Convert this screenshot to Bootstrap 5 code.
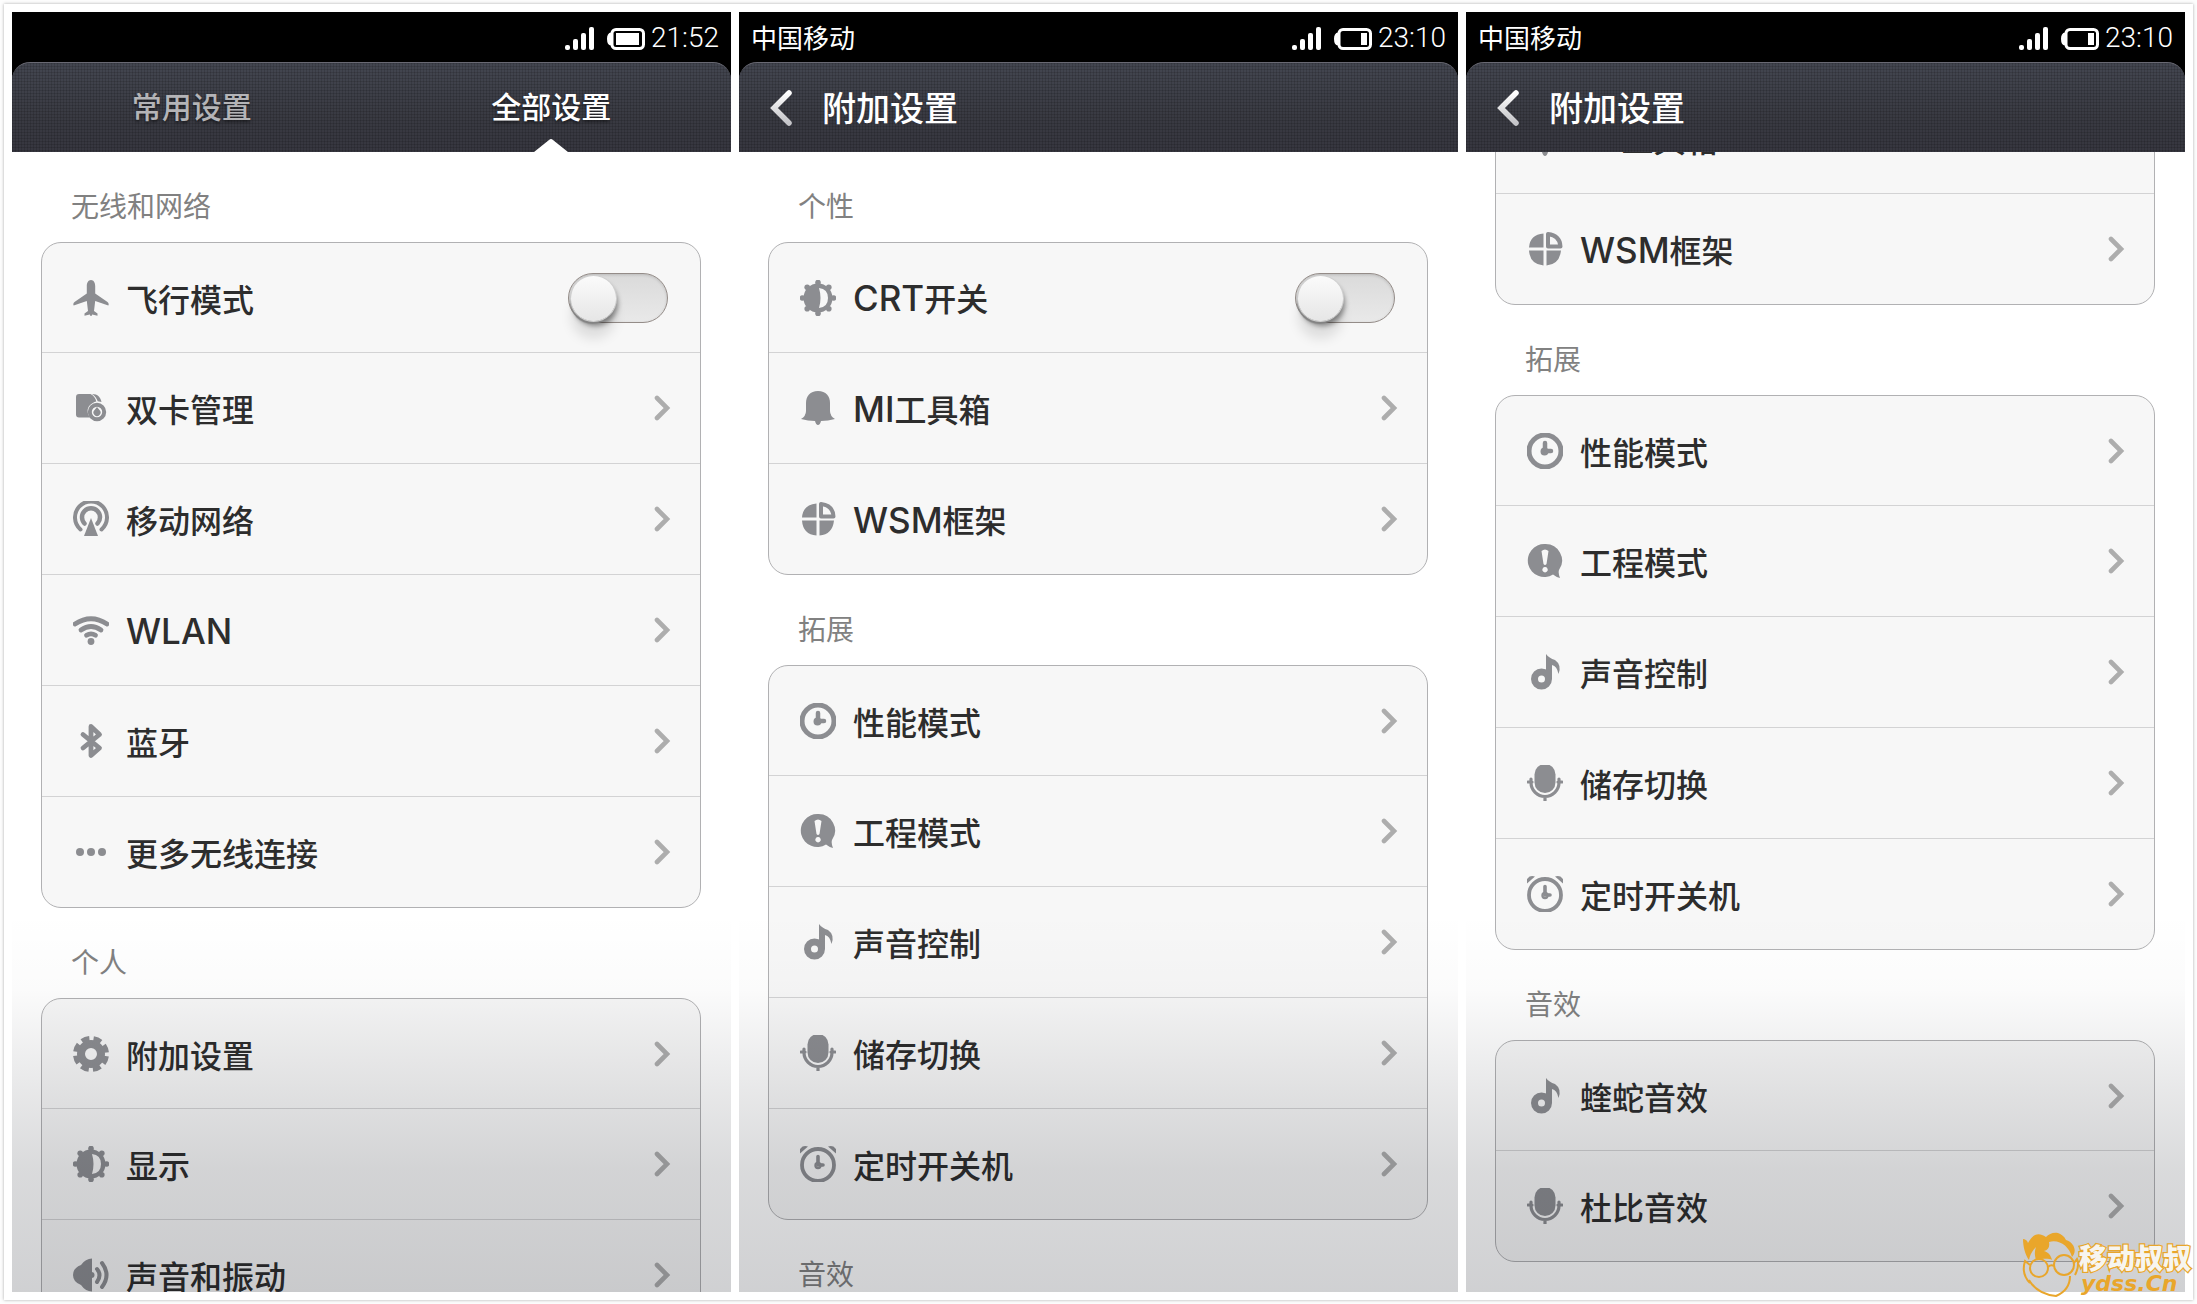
<!DOCTYPE html>
<html lang="zh-CN">
<head>
<meta charset="utf-8">
<meta name="viewport" content="width=device-width, initial-scale=1">
<title>设置</title>
<link href="https://cdn.jsdelivr.net/npm/bootstrap@5.3.0/dist/css/bootstrap.min.css" rel="stylesheet">
<style>
body{background:#fdfdfd;font-family:"Noto Sans CJK SC","Liberation Sans",sans-serif;color:#2d2d2d}
.sheet{background:#fff;box-shadow:0 0 3px #aaa}
.phone{flex:1 1 0;min-width:0;background:#fff}
.phone-scroll{min-height:0;flex:1 1 0;overflow:hidden}
.phone-scroll::after{content:"";position:absolute;inset:auto 0 0 0;height:380px;pointer-events:none;
 background:linear-gradient(rgba(4,8,18,0),rgba(4,8,18,.015) 20%,rgba(4,8,18,.09) 46%,rgba(4,8,18,.15) 68%,rgba(4,8,18,.19))}
.statusbar{height:50px;background:#000;color:#fff;padding:0 12px 0 12px}
.statusbar svg{margin-top:4px}
.carrier{font-size:26px;line-height:48px}
.clock{font:300 28px/56px Roboto,"Liberation Sans",sans-serif;margin-left:6px;padding-top:2px}
.topbar{height:90px;border-radius:18px 18px 0 0;border-top:1px solid #696973;color:#fff;
 background:repeating-linear-gradient(90deg,rgba(0,0,0,.13) 0 1px,transparent 1px 3px),repeating-linear-gradient(rgba(0,0,0,.13) 0 1px,transparent 1px 3px),linear-gradient(#434650,#393a42 60%,#36363f)}
.topbar a{color:#fff;text-decoration:none;text-shadow:0 2px 3px rgba(0,0,0,.5)}
.tab{font-size:30px;font-weight:500;line-height:84px}
.topbar a.tab-off{color:#b4b4b7}
.tab-mark{bottom:0;left:50%;margin-left:-17px}
.page-name{font-size:34px;font-weight:500;line-height:86px;margin:0 0 2px}
.back{margin-left:30px;margin-right:29px}
.group-name{font-size:28px;line-height:40px;color:#818181;margin:0;padding:33px 0 17px 59px}
.rows{margin:0 30px 0 29px;border:1px solid #b1b1b3;border-radius:20px;background:#f7f7f7;flex-shrink:0}
.rows .list-group-item{min-height:111px;background:transparent;border:0;border-bottom:1px solid #d3d3d4;padding:0 29px 0 31px;color:#2d2d2d;font-size:32px;font-weight:500;line-height:48px}
.rows .list-group-item:first-child,.rows .list-group-item:last-child{min-height:110px}
.rows .list-group-item:last-child{border-bottom:0}
.row-icon{width:36px;height:36px;margin-right:17px;flex:none;color:#8c8d91;overflow:visible}
.row-text{flex:1 1 auto}
.latin{font-family:Inter,"Liberation Sans",sans-serif;font-size:35px}
.chev{width:17px;height:26px;flex:none;color:#adadad}
.rows .toggle{width:100px;height:50px;margin:0 3px 0 0;flex:none;border:1px solid #948c88;border-radius:25px;background:linear-gradient(#dadada,#e9e9e9);box-shadow:inset 0 1px 3px rgba(0,0,0,.15);appearance:none;position:relative;cursor:pointer}
.toggle::before{content:"";position:absolute;left:2px;top:2px;width:45px;height:45px;border-radius:50%;background:linear-gradient(#e6e6e6,#fbfbfb);background:linear-gradient(#fbfbfb,#e6e6e6);box-shadow:0 0 0 1px #d0d0d0,-1px 3px 1px #858585,2px 5px 5px rgba(0,0,0,.4),0 18px 12px rgba(0,0,0,.1)}
.toggle:checked::before{left:51px}
.foot-pad{height:30px;flex:none}
.stamp{right:4px;bottom:4px;width:174px;height:68px}
.stamp-cn{font-family:"Noto Sans CJK SC",sans-serif;font-weight:900}
.stamp-url{font-family:"DejaVu Sans",sans-serif;font-weight:700;font-style:italic}
</style>
</head>
<body class="vh-100 overflow-hidden d-flex p-1">
<svg width="0" height="0" class="position-absolute" aria-hidden="true">
<defs>
<linearGradient id="silver" x1="0" y1="0" x2="0" y2="1"><stop offset="0" stop-color="#fff"/><stop offset="1" stop-color="#c4c4c8"/></linearGradient>
<symbol id="chev" viewBox="0 0 17 26"><path d="M3 3l10 10L3 23" fill="none" stroke="currentColor" stroke-width="4.6" stroke-linecap="round" stroke-linejoin="miter"/></symbol>
<symbol id="signal" viewBox="0 0 30 24"><g fill="#fff"><rect x="0" y="18" width="5" height="5" rx="2"/><rect x="8" y="12" width="5" height="11" rx="2"/><rect x="16" y="6" width="5" height="17" rx="2"/><rect x="24" y="0" width="5" height="23" rx="2"/></g></symbol>
<symbol id="cell" viewBox="0 0 38 24"><rect x="5" y="2.5" width="31.500" height="19" rx="4" fill="none" stroke="#fff" stroke-width="3"/><path d="M4 5.500Q0 6 0 12t4 6.500z" fill="#fff"/></symbol>
<symbol id="plane" viewBox="0 0 36 36"><path fill="currentColor" d="M18 0c2.800 0 4.200 3 4.200 6v7.500L34.500 22c1.200 1 1.500 2.500 .8 3.500L22.200 21l-1.200 10 3.500 2.500v2.300l-5.300-1.300L18 37l-1.200-2.500-5.300 1.300v-2.300l3.500-2.500-1.200-10L.7 25.500c-.7-1-.4-2.500 .8-3.500l12.300-8.500V6c0-3 1.400-6 4.200-6z"/></symbol>
<symbol id="sim" viewBox="0 0 36 36"><path fill="currentColor" d="M6 4h11.500c3 1.500 5 4 5.800 7.500-5 1.300-8.700 5-8.700 9.500 0 2.500.9 4.700 2.400 6.500H6q-3 0-3-3V7q0-3 3-3z"/><path fill="currentColor" d="M19 4c6 0 8.500 3.500 9.500 8l-3.800-.8C23.700 8.500 22 6 19 4z"/><circle cx="24" cy="22" r="7.200" fill="none" stroke="currentColor" stroke-width="4"/><path fill="currentColor" d="M24 17l2.500 3A3.500 3.500 0 1 1 21.500 20z"/></symbol>
<symbol id="antenna" viewBox="0 0 36 36"><g fill="none" stroke="currentColor" stroke-width="4" stroke-linecap="round"><path d="M7.500 28.500A16 16 0 1 1 28.500 28.500"/><path d="M11.500 22.500A9 9 0 1 1 24.500 22.500" stroke-width="4.500"/></g><path fill="currentColor" d="M18 17l7 18H11z"/></symbol>
<symbol id="wifi" viewBox="0 0 36 36"><g fill="none" stroke="currentColor" stroke-width="4.800" stroke-linecap="round"><path d="M2 12Q18 1.500 34 12"/><path d="M8 18Q18 11 28 18"/><path d="M13.500 23.300Q18 20.500 22.500 23.300"/></g><circle cx="18" cy="29.500" r="3.400" fill="currentColor"/></symbol>
<symbol id="bt" viewBox="0 0 36 36"><path d="M10 11.500L26.500 25 18 32.500V3.500L26.500 11.500 10 25" fill="none" stroke="currentColor" stroke-width="4.800" stroke-linecap="round" stroke-linejoin="round"/></symbol>
<symbol id="dots" viewBox="0 0 36 36"><g fill="currentColor"><circle cx="7" cy="18" r="4"/><circle cx="18" cy="18" r="4"/><circle cx="29" cy="18" r="4"/></g></symbol>
<symbol id="gear" viewBox="0 0 36 36"><circle cx="18" cy="18" r="10" fill="none" stroke="currentColor" stroke-width="8"/><circle cx="18" cy="18" r="14.500" fill="none" stroke="currentColor" stroke-width="7" stroke-dasharray="7.400 3.988" stroke-dashoffset="-1.994"/></symbol>
<symbol id="bright" viewBox="0 0 36 36"><path fill="currentColor" fill-rule="evenodd" d="M18 3.500a14.500 14.500 0 1 1 0 29 14.500 14.500 0 1 1 0-29zM19 8q3 10 0 20 9-1 9-10T19 8z"/><g fill="currentColor"><circle cx="18" cy="2.500" r="2.800"/><circle cx="18" cy="33.500" r="2.800"/><circle cx="2.500" cy="18" r="2.800"/><circle cx="33.500" cy="18" r="2.800"/><circle cx="7.200" cy="7.200" r="2.800"/><circle cx="28.800" cy="7.200" r="2.800"/><circle cx="7.200" cy="28.800" r="2.800"/><circle cx="28.800" cy="28.800" r="2.800"/></g></symbol>
<symbol id="speaker" viewBox="0 0 36 36"><path fill="currentColor" d="M19 1.500v33q-6.500 0-11-6.500-8-3-8-10t8-10Q12.500 1.500 19 1.500z"/><g fill="none" stroke="currentColor" stroke-width="4" stroke-linecap="round"><path d="M24 12q5 6 0 13"/><path d="M29 6q9 12 0 24"/></g><circle cx="18.500" cy="18" r="3" fill="currentColor"/></symbol>
<symbol id="bell" viewBox="0 0 36 36"><path fill="currentColor" d="M18 1c8 0 12 5 12 12v8q0 5 5 8-7 2-14 2-1 4-3 4t-3-4q-7 0-14-2 5-3 5-8v-8C6 6 10 1 18 1z"/></symbol>
<symbol id="pie" viewBox="0 0 36 36"><path fill="currentColor" d="M16.500 2.500v14H2q1-13 14.500-14zM2 19.500h14.500v15Q3 33.500 2 19.500zM19.500 19.500H34q-1.500 14-14.500 15z"/><path fill="none" stroke="currentColor" stroke-width="4" stroke-linejoin="round" d="M21 3v12.500h12.500Q33 4.500 21 3z"/></symbol>
<symbol id="clock" viewBox="0 0 36 36"><circle cx="18" cy="18" r="16" fill="none" stroke="currentColor" stroke-width="5"/><path d="M18 10v8h6" fill="none" stroke="currentColor" stroke-width="4.500" stroke-linecap="round"/><circle cx="17.500" cy="18.500" r="2.800" fill="none" stroke="currentColor" stroke-width="2.400"/></symbol>
<symbol id="bang" viewBox="0 0 36 36"><path fill="currentColor" fill-rule="evenodd" d="M18 1a16.500 16.500 0 0 1 14 26q-1 3 1 8-4-1-7-3.500A16.500 16.500 0 1 1 18 1zM14.500 8l2 13q1.500 2 3 0l2-13q-3.500-3-7 0zM18 24a2.700 2.700 0 1 0 .1 0z"/></symbol>
<symbol id="note" viewBox="0 0 36 36"><circle cx="14.500" cy="25" r="7" fill="none" stroke="currentColor" stroke-width="7"/><path fill="currentColor" d="M19 0q3 4 9 6 7 5 3.500 14Q30 12 25 11v14h-6z"/></symbol>
<symbol id="mic" viewBox="0 0 36 36"><rect x="7.500" y="-1" width="21" height="29" rx="10.500" fill="currentColor"/><path d="M4 14v3.500a14 14 0 0 0 28 0V14M1 17h4M31 17h4M18 32v4" fill="none" stroke="currentColor" stroke-width="3.200" stroke-linecap="round"/></symbol>
<symbol id="alarm" viewBox="0 0 36 36"><circle cx="18" cy="19" r="16" fill="none" stroke="currentColor" stroke-width="3.800"/><path d="M18 10.500v8.500h5" fill="none" stroke="currentColor" stroke-width="3.600" stroke-linecap="round"/><circle cx="18" cy="19.500" r="2.600" fill="none" stroke="currentColor" stroke-width="2.200"/><path fill="currentColor" d="M8 .5Q3-1 .5 2.500T-.5 8zM28 .5Q33-1 35.500 2.500T36.500 8z"/></symbol>
<symbol id="back" viewBox="0 0 24 36"><path d="M20 3L5 18l15 15" fill="none" stroke="url(#silver)" stroke-width="5.500" stroke-linecap="round"/></symbol>
</defs>
</svg>

<div class="sheet flex-fill d-flex gap-2 p-2 position-relative">

<section class="phone d-flex flex-column">
  <div class="bg-black">
    <div class="statusbar d-flex align-items-center">
      <svg class="ms-auto me-2" width="30" height="24" role="img" aria-label="信号"><use href="#signal"/></svg>
      <svg class="ms-1" width="38" height="24" role="img" aria-label="电池"><use href="#cell"/><rect x="9" y="6" width="23" height="12" fill="#fff"/></svg>
      <span class="clock">21:52</span>
    </div>
    <nav class="topbar d-flex text-center">
      <a href="#" class="tab tab-off w-50">常用设置</a>
      <a href="#" class="tab w-50 position-relative" aria-current="page">全部设置
        <svg class="tab-mark position-absolute" width="34" height="13" aria-hidden="true"><path d="M0 13L15 1q2-2 4 0l15 12z" fill="#fff"/></svg></a>
    </nav>
  </div>
  <div class="phone-scroll position-relative d-flex flex-column">
    <h2 class="group-name fw-normal">无线和网络</h2>
    <div class="rows list-group">
      <div class="list-group-item d-flex align-items-center"><svg class="row-icon"><use href="#plane"/></svg><label class="row-text" for="flight">飞行模式</label><input class="toggle" type="checkbox" role="switch" id="flight"></div>
      <a href="#" class="list-group-item d-flex align-items-center"><svg class="row-icon"><use href="#sim"/></svg><span class="row-text">双卡管理</span><svg class="chev"><use href="#chev"/></svg></a>
      <a href="#" class="list-group-item d-flex align-items-center"><svg class="row-icon"><use href="#antenna"/></svg><span class="row-text">移动网络</span><svg class="chev"><use href="#chev"/></svg></a>
      <a href="#" class="list-group-item d-flex align-items-center"><svg class="row-icon"><use href="#wifi"/></svg><span class="row-text"><span class="latin">WLAN</span></span><svg class="chev"><use href="#chev"/></svg></a>
      <a href="#" class="list-group-item d-flex align-items-center"><svg class="row-icon"><use href="#bt"/></svg><span class="row-text">蓝牙</span><svg class="chev"><use href="#chev"/></svg></a>
      <a href="#" class="list-group-item d-flex align-items-center"><svg class="row-icon"><use href="#dots"/></svg><span class="row-text">更多无线连接</span><svg class="chev"><use href="#chev"/></svg></a>
    </div>
    <h2 class="group-name fw-normal">个人</h2>
    <div class="rows list-group">
      <a href="#" class="list-group-item d-flex align-items-center"><svg class="row-icon"><use href="#gear"/></svg><span class="row-text">附加设置</span><svg class="chev"><use href="#chev"/></svg></a>
      <a href="#" class="list-group-item d-flex align-items-center"><svg class="row-icon"><use href="#bright"/></svg><span class="row-text">显示</span><svg class="chev"><use href="#chev"/></svg></a>
      <a href="#" class="list-group-item d-flex align-items-center"><svg class="row-icon"><use href="#speaker"/></svg><span class="row-text">声音和振动</span><svg class="chev"><use href="#chev"/></svg></a>
    </div>
  </div>
</section>

<section class="phone d-flex flex-column">
  <div class="bg-black">
    <div class="statusbar d-flex align-items-center">
      <span class="carrier">中国移动</span>
      <svg class="ms-auto me-2" width="30" height="24" role="img" aria-label="信号"><use href="#signal"/></svg>
      <svg class="ms-1" width="38" height="24" role="img" aria-label="电池"><use href="#cell"/><rect x="27" y="6" width="6" height="12" fill="#fff"/></svg>
      <span class="clock">23:10</span>
    </div>
    <div class="topbar d-flex align-items-center">
      <a href="#" class="back d-flex" aria-label="返回"><svg width="24" height="36"><use href="#back"/></svg></a>
      <h1 class="page-name">附加设置</h1>
    </div>
  </div>
  <div class="phone-scroll position-relative d-flex flex-column">
    <h2 class="group-name fw-normal">个性</h2>
    <div class="rows list-group">
      <div class="list-group-item d-flex align-items-center"><svg class="row-icon"><use href="#bright"/></svg><label class="row-text" for="crt"><span class="latin">CRT</span>开关</label><input class="toggle" type="checkbox" role="switch" id="crt"></div>
      <a href="#" class="list-group-item d-flex align-items-center"><svg class="row-icon"><use href="#bell"/></svg><span class="row-text"><span class="latin">MI</span>工具箱</span><svg class="chev"><use href="#chev"/></svg></a>
      <a href="#" class="list-group-item d-flex align-items-center"><svg class="row-icon"><use href="#pie"/></svg><span class="row-text"><span class="latin">WSM</span>框架</span><svg class="chev"><use href="#chev"/></svg></a>
    </div>
    <h2 class="group-name fw-normal">拓展</h2>
    <div class="rows list-group">
      <a href="#" class="list-group-item d-flex align-items-center"><svg class="row-icon"><use href="#clock"/></svg><span class="row-text">性能模式</span><svg class="chev"><use href="#chev"/></svg></a>
      <a href="#" class="list-group-item d-flex align-items-center"><svg class="row-icon"><use href="#bang"/></svg><span class="row-text">工程模式</span><svg class="chev"><use href="#chev"/></svg></a>
      <a href="#" class="list-group-item d-flex align-items-center"><svg class="row-icon"><use href="#note"/></svg><span class="row-text">声音控制</span><svg class="chev"><use href="#chev"/></svg></a>
      <a href="#" class="list-group-item d-flex align-items-center"><svg class="row-icon"><use href="#mic"/></svg><span class="row-text">储存切换</span><svg class="chev"><use href="#chev"/></svg></a>
      <a href="#" class="list-group-item d-flex align-items-center"><svg class="row-icon"><use href="#alarm"/></svg><span class="row-text">定时开关机</span><svg class="chev"><use href="#chev"/></svg></a>
    </div>
    <h2 class="group-name fw-normal">音效</h2>
  </div>
</section>

<section class="phone d-flex flex-column">
  <div class="bg-black">
    <div class="statusbar d-flex align-items-center">
      <span class="carrier">中国移动</span>
      <svg class="ms-auto me-2" width="30" height="24" role="img" aria-label="信号"><use href="#signal"/></svg>
      <svg class="ms-1" width="38" height="24" role="img" aria-label="电池"><use href="#cell"/><rect x="27" y="6" width="6" height="12" fill="#fff"/></svg>
      <span class="clock">23:10</span>
    </div>
    <div class="topbar d-flex align-items-center">
      <a href="#" class="back d-flex" aria-label="返回"><svg width="24" height="36"><use href="#back"/></svg></a>
      <h1 class="page-name">附加设置</h1>
    </div>
  </div>
  <div class="phone-scroll position-relative d-flex flex-column justify-content-end">
    <div class="rows list-group">
      <a href="#" class="list-group-item d-flex align-items-center"><svg class="row-icon"><use href="#bell"/></svg><span class="row-text"><span class="latin">MI</span>工具箱</span><svg class="chev"><use href="#chev"/></svg></a>
      <a href="#" class="list-group-item d-flex align-items-center"><svg class="row-icon"><use href="#pie"/></svg><span class="row-text"><span class="latin">WSM</span>框架</span><svg class="chev"><use href="#chev"/></svg></a>
    </div>
    <h2 class="group-name fw-normal">拓展</h2>
    <div class="rows list-group">
      <a href="#" class="list-group-item d-flex align-items-center"><svg class="row-icon"><use href="#clock"/></svg><span class="row-text">性能模式</span><svg class="chev"><use href="#chev"/></svg></a>
      <a href="#" class="list-group-item d-flex align-items-center"><svg class="row-icon"><use href="#bang"/></svg><span class="row-text">工程模式</span><svg class="chev"><use href="#chev"/></svg></a>
      <a href="#" class="list-group-item d-flex align-items-center"><svg class="row-icon"><use href="#note"/></svg><span class="row-text">声音控制</span><svg class="chev"><use href="#chev"/></svg></a>
      <a href="#" class="list-group-item d-flex align-items-center"><svg class="row-icon"><use href="#mic"/></svg><span class="row-text">储存切换</span><svg class="chev"><use href="#chev"/></svg></a>
      <a href="#" class="list-group-item d-flex align-items-center"><svg class="row-icon"><use href="#alarm"/></svg><span class="row-text">定时开关机</span><svg class="chev"><use href="#chev"/></svg></a>
    </div>
    <h2 class="group-name fw-normal">音效</h2>
    <div class="rows list-group">
      <a href="#" class="list-group-item d-flex align-items-center"><svg class="row-icon"><use href="#note"/></svg><span class="row-text">蝰蛇音效</span><svg class="chev"><use href="#chev"/></svg></a>
      <a href="#" class="list-group-item d-flex align-items-center"><svg class="row-icon"><use href="#mic"/></svg><span class="row-text">杜比音效</span><svg class="chev"><use href="#chev"/></svg></a>
    </div>
    <div class="foot-pad"></div>
  </div>
</section>
</div>

<svg class="stamp position-absolute" viewBox="0 0 174 68" role="img" aria-label="移动叔叔 ydss.Cn">
  <g fill="#e9a62b"><path d="M4 7c0 7 2 16 6 21 1-5 3-9 7-13-2 6-1 9 0 13 6-1 12-2 16 0-1-5-4-8-8-9 4-1 6-4 5-9 10-3 20 4 23 15 5-5 3-14-6-17C45 4 42 2 39 1c-5-1-9 1-12 4C18-1 13 4 9 11 8 8 6 7 4 7z"/></g>
  <g fill="none" stroke="#e9a62b" stroke-width="2"><circle cx="20" cy="36" r="9"/><circle cx="45" cy="33" r="10"/><path d="M29 35q3-3 6-1M55 31l3-4q3 6-2 16M11 33l-5-4q-4 13 5 22M10 48q8 14 27 16 14-6 14-20"/></g>
  <text class="stamp-cn" x="60" y="37" font-size="28" fill="#f7f5ef" stroke="#e9a62b" stroke-width="2.500" paint-order="stroke">移动叔叔</text>
  <text class="stamp-url" x="62" y="59" font-size="22" fill="#e9a62b">ydss.Cn</text>
</svg>
<script src="https://cdn.jsdelivr.net/npm/bootstrap@5.3.0/dist/js/bootstrap.bundle.min.js"></script>
</body>
</html>
